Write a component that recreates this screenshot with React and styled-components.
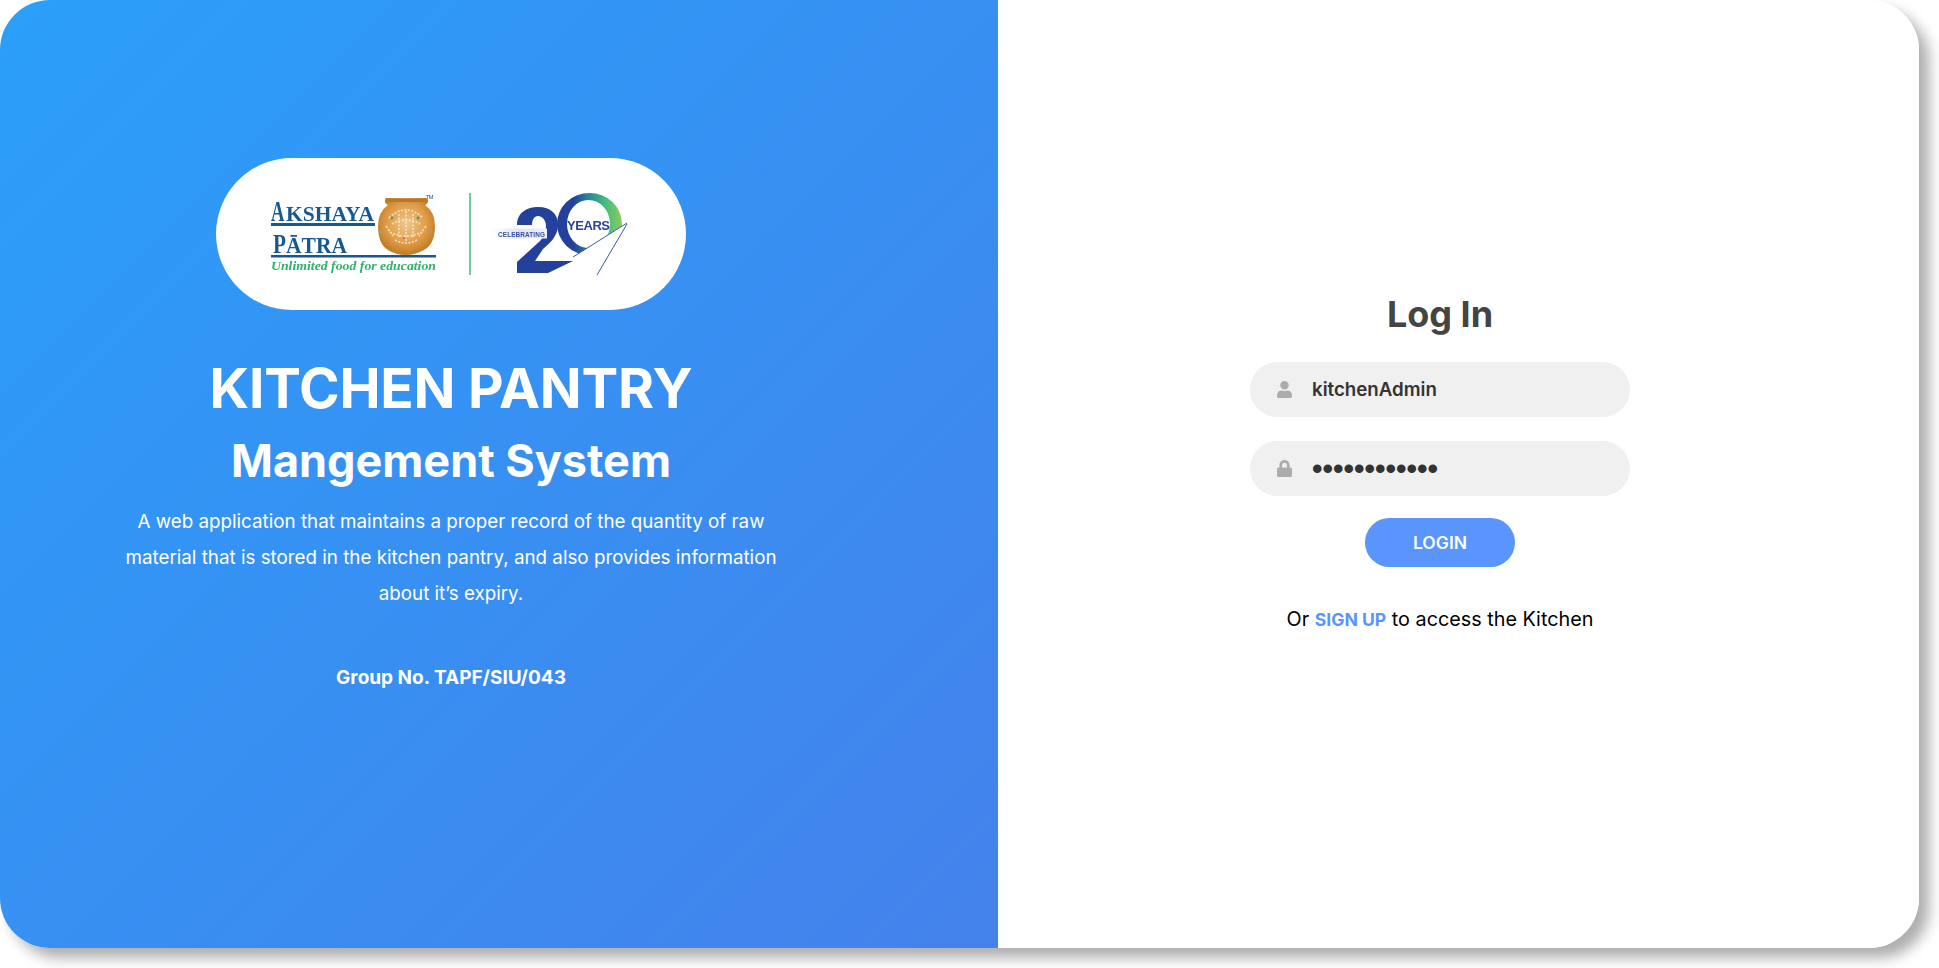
import React from "react";
import styled, { createGlobalStyle } from "styled-components";
import { FaUser, FaLock } from "react-icons/fa";

const GlobalStyle = createGlobalStyle`
  html, body {
    margin: 0;
    height: 100%;
    background: #fff;
    overflow: hidden;
  }
  * {
    box-sizing: border-box;
  }
`;

const FONT = `"Inter", "Noto Sans", "Liberation Sans", sans-serif`;

const Shadow = styled.div`
  width: 1919px;
  height: 948px;
  border-radius: 50px;
  box-shadow: 10px 10px 14px rgba(0, 0, 0, 0.32);
`;

const Card = styled.div`
  display: grid;
  grid-template-columns: 998px 921px;
  width: 1919px;
  height: 948px;
  border-radius: 50px;
  overflow: hidden;
  background: #fff;
  font-family: ${FONT};
`;

const Intro = styled.section`
  display: flex;
  flex-direction: column;
  align-items: center;
  padding: 158px 96px 0 0;
  color: #fff;
  text-align: center;
  background: linear-gradient(135deg, #2a9ffa 0%, #4481eb 100%);
`;

const LogoPill = styled.div`
  display: flex;
  align-items: center;
  justify-content: center;
  width: 470px;
  height: 152px;
  border-radius: 76px;
  background: #fff;
`;

const Title = styled.h1`
  margin: 42px 0 0;
  font-size: 55px;
  line-height: 72px;
  font-weight: 700;
  letter-spacing: -0.2px;
`;

const Subtitle = styled.h2`
  margin: 8px 0 0;
  font-size: 45px;
  line-height: 58px;
  font-weight: 700;
`;

const Description = styled.p`
  margin: 14px 0 0;
  font-size: 18.8px;
  line-height: 36px;
  font-weight: 400;
`;

const Group = styled.p`
  margin: 52px 0 0;
  font-size: 19px;
  line-height: 28px;
  font-weight: 700;
`;

const Login = styled.section`
  display: flex;
  flex-direction: column;
  align-items: center;
  padding: 286px 37px 0 0;
`;

const Heading = styled.h2`
  margin: 0 0 20px;
  font-size: 36px;
  line-height: 56px;
  font-weight: 700;
  color: #444;
`;

const Field = styled.label`
  display: flex;
  align-items: center;
  gap: 19px;
  width: 380px;
  height: 55px;
  margin-bottom: 24px;
  padding-left: 26px;
  border-radius: 28px;
  background: #f0f0f0;
  color: #acacac;
  font-size: 17px;
`;

const Input = styled.input`
  flex: 1;
  min-width: 0;
  border: 0;
  outline: 0;
  padding: 0;
  background: none;
  font-family: ${(p) => (p.type === "password" ? `"Liberation Sans", sans-serif` : FONT)};
  font-size: ${(p) => (p.type === "password" ? "30px" : "18.7px")};
  font-weight: 600;
  color: #333;
`;

const Submit = styled.button`
  width: 150px;
  height: 49px;
  margin-top: -2px;
  border: 0;
  border-radius: 25px;
  background: #5995fd;
  color: #fff;
  font-family: ${FONT};
  font-size: 17.5px;
  font-weight: 600;
`;

const Switch = styled.p`
  margin: 38px 0 0;
  font-size: 19.8px;
  line-height: 28px;
  color: #000;
`;

const SignUp = styled.a`
  font-weight: 700;
  font-size: 17.6px;
  color: #5995fd;
  text-decoration: none;
`;

const LogoSvg = styled.svg`
  display: block;
  width: 370px;
  height: 90px;
`;

const Logo = () => (
  <LogoSvg viewBox="266 189 370 90">
    <defs>
      <radialGradient id="pot" cx="0.5" cy="0.45" r="0.6">
        <stop offset="0" stopColor="#efc98c" />
        <stop offset="0.6" stopColor="#e09a45" />
        <stop offset="1" stopColor="#b8741f" />
      </radialGradient>
      <linearGradient id="ring" x1="0" y1="0" x2="1" y2="0">
        <stop offset="0.25" stopColor="#22409c" />
        <stop offset="0.5" stopColor="#2b8a96" />
        <stop offset="0.75" stopColor="#47bd7d" />
        <stop offset="1" stopColor="#8ccb5c" />
      </linearGradient>
      <linearGradient id="fade" x1="0" y1="0" x2="1" y2="0">
        <stop offset="0" stopColor="#dfe4f4" stopOpacity="0" />
        <stop offset="0.5" stopColor="#dde2f3" />
        <stop offset="1" stopColor="#f1f3fa" />
      </linearGradient>
      <filter id="soft" x="-5%" y="-5%" width="110%" height="110%">
        <feGaussianBlur stdDeviation="0.4" />
      </filter>
    </defs>
    <g filter="url(#soft)">
      <text transform="translate(271 221) scale(.62 1)" fontFamily="Liberation Serif" fontWeight="700" fill="#14598f" fontSize="30">A</text>
      <text x="286" y="221" fontFamily="Liberation Serif" fontWeight="700" fill="#14598f" fontSize="21" textLength="88" lengthAdjust="spacingAndGlyphs">KSHAYA</text>
      <rect x="271" y="223" width="104" height="3" fill="#14598f" />
      <text transform="translate(273 253) scale(.76 1)" fontFamily="Liberation Serif" fontWeight="700" fill="#14598f" fontSize="28">P</text>
      <text x="286" y="253" fontFamily="Liberation Serif" fontWeight="700" fill="#14598f" fontSize="23" textLength="61" lengthAdjust="spacingAndGlyphs">ĀTRA</text>
      <rect x="271" y="255" width="165" height="2.5" fill="#14598f" />
      <text x="271" y="270" fontFamily="Liberation Serif" fontStyle="italic" fontWeight="700" fill="#2fb36c" fontSize="13" textLength="165" lengthAdjust="spacingAndGlyphs">Unlimited food for education</text>

      <path d="M386 198H426Q428 198 428 201Q428 204 425 205Q435 212 435 226Q435 244 424 250Q415 255 406 255Q396 255 388 250Q378 244 378 226Q378 212 388 205Q385 204 385 201Q385 198 386 198Z" fill="url(#pot)" />
      <rect x="387" y="199" width="39" height="3" rx="1.5" fill="#b27a2a" />
      <path d="M389 218q8-8 17-8t17 8M392 224q14-8 28 0M390 232q16 8 32 0M395 240q11 6 22 0M399 214v24M406 211v30M413 214v24M386 226q4 6 7 10M426 226q-4 6-7 10" fill="none" stroke="#fbf0da" strokeWidth="1.6" opacity="0.8" strokeDasharray="2 1.5" />
      <circle cx="392" cy="218" r="1.4" fill="#4f9a6b" />
      <circle cx="418" cy="218" r="1.4" fill="#4f9a6b" />
      <circle cx="381" cy="232" r="1.2" fill="#8fa3a8" />
      <circle cx="431" cy="232" r="1.2" fill="#8fa3a8" />
      <circle cx="404" cy="238" r="1" fill="#e0508a" />
      <text x="425.5" y="199" fontFamily="Liberation Sans" fill="#14598f" fontSize="6" textLength="8">TM</text>

      <rect x="469" y="193" width="2" height="82" fill="#6fcb9f" />

      <path fillRule="evenodd" fill="url(#ring)" d="M557 224a32.500 31 0 1 0 65 0a32.500 31 0 1 0-65 0zM567 224a21.500 24 0 1 0 43 0a21.500 24 0 1 0-43 0z" />
      <path d="M628 222 L573 257 L548 276 H600 L640 240z" fill="#fff" />
      <path d="M627 223 L573 257" stroke="#3a55ad" strokeWidth="1" />
      <path d="M627 224 L597 275" stroke="#3a55ad" strokeWidth="1" />
      <path d="M517 225C517 212 528 207 538 207C551 207 558 214 558 225C558 236 550 243 543 249L535 261H573L548 273H517V262L540 241C544 237 546 232 546 226C546 220 542 216 538 216C534 216 532 220 532 225Z" fill="#22409c" />
      <rect x="492" y="228.500" width="55" height="10" fill="url(#fade)" />
      <text x="498" y="236.500" fontFamily="Liberation Sans" fontWeight="700" fill="#3a4fa3" fontSize="6.4" textLength="47">CELEBRATING</text>
      <text x="567" y="230" fontFamily="Liberation Sans" fontWeight="700" fill="#2a429c" fontSize="13" textLength="43">YEARS</text>
    </g>
  </LogoSvg>
);

export default function App() {
  return (
    <>
      <GlobalStyle />
      <Shadow>
        <Card>
          <Intro>
            <LogoPill>
              <Logo />
            </LogoPill>
            <Title>KITCHEN PANTRY</Title>
            <Subtitle>Mangement System</Subtitle>
            <Description>
              A web application that maintains a proper record of the quantity of raw
              <br />
              material that is stored in the kitchen pantry, and also provides information
              <br />
              about it’s expiry.
            </Description>
            <Group>Group No. TAPF/SIU/043</Group>
          </Intro>
          <Login>
            <Heading>Log In</Heading>
            <Field>
              <FaUser />
              <Input type="text" value="kitchenAdmin" readOnly />
            </Field>
            <Field>
              <FaLock />
              <Input type="password" value="kitchenAdmin" readOnly />
            </Field>
            <Submit>LOGIN</Submit>
            <Switch>
              Or <SignUp href="#">SIGN UP</SignUp> to access the Kitchen
            </Switch>
          </Login>
        </Card>
      </Shadow>
    </>
  );
}
